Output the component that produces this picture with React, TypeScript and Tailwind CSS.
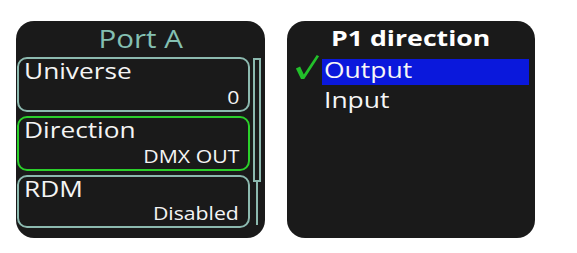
const font = { fontFamily: '"Open Sans", "DejaVu Sans", sans-serif' };

function Card({ label, value, selected, h }: { label: string; value: string; selected?: boolean; h: string }) {
  return (
    <div
      className={`${h} flex flex-col justify-between rounded-[10px] border-2 pl-[5px] pr-[9px] pb-[3px] ${
        selected ? 'border-[#2bd02b]' : 'border-[#8cb9af]'
      }`}
    >
      <span className="inline-block origin-left scale-x-[1.25] text-[21px] leading-[24px] text-[#f4f4f4]">{label}</span>
      <div className="flex justify-end">
        <span className="inline-block origin-right scale-x-[1.18] text-[18px] leading-[20px] text-[#f4f4f4]">{value}</span>
      </div>
    </div>
  );
}

export default function App() {
  const options = [
    { name: 'Output', active: true },
    { name: 'Input', active: false },
  ];

  return (
    <div className="h-[253px] w-[577px] bg-white pl-[16px] pt-[21px]" style={font}>
      <div className="flex gap-[22px]">
        {/* port settings */}
        <div className="flex h-[217px] w-[249px] flex-col overflow-hidden rounded-[18px] bg-[#1a1a1a]">
          <div className="flex h-[36px] justify-center pt-[2px]">
            <span className="inline-block scale-x-[1.18] text-[25px] leading-[30px] text-[#84c0b2]">Port A</span>
          </div>
          <div className="flex pl-[1px]">
            <div className="flex w-[233px] flex-col gap-[4px]">
              <Card label="Universe" value="0" h="h-[55px]" />
              <Card label="Direction" value="DMX OUT" h="h-[55px]" selected />
              <Card label="RDM" value="Disabled" h="h-[53px]" />
            </div>
            <div className="ml-[3px] flex w-[8px] flex-col items-center pt-[1px]">
              <div className="h-[124px] w-[8px] border-2 border-[#8cb9af]" />
              <div className="h-[43px] w-[2px] bg-[#8cb9af]" />
            </div>
          </div>
        </div>

        {/* direction menu */}
        <div className="flex h-[217px] w-[248px] flex-col rounded-[18px] bg-[#1a1a1a]">
          <div className="flex h-[38px] justify-center pt-[4px]">
            <span className="inline-block scale-x-[1.27] text-[21px] font-bold leading-[26px] text-white">P1 direction</span>
          </div>
          <div className="flex flex-col gap-[4px]">
            {options.map((o) => (
              <div key={o.name} className="flex h-[26px]">
                <div className="relative w-[35px]">
                  {o.active && (
                    <svg className="absolute left-[8px] top-[-5px]" width="25" height="26" viewBox="0 0 27 28">
                      <path d="M1 15.5 L5.5 13.5 L9.5 22 L23.5 1 L26 2.5 L10 27 L6.5 27 Z" fill="#22c02a" />
                    </svg>
                  )}
                </div>
                <div className={`w-[207px] pl-[2px] ${o.active ? 'bg-[#0a18dc]' : ''}`}>
                  <span className="inline-block origin-left scale-x-[1.26] text-[21px] leading-[22px] text-[#f6f6f6]">{o.name}</span>
                </div>
              </div>
            ))}
          </div>
        </div>
      </div>
    </div>
  );
}
